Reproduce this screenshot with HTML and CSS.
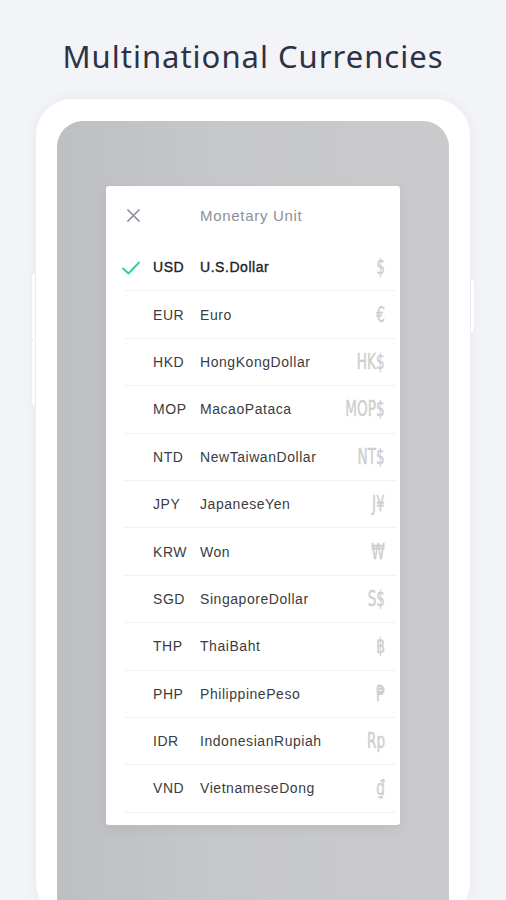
FILE: index.html
```html
<!DOCTYPE html>
<html lang="en">
<head>
<meta charset="utf-8">
<title>Multinational Currencies</title>
<link rel="stylesheet" href="styles.css">
</head>
<body>
<header class="title-wrap">
  <h1 class="title">Multinational Currencies</h1>
</header>
<div class="phone">
  <span class="side-btn side-left-1"></span>
  <span class="side-btn side-left-2"></span>
  <span class="side-btn side-right"></span>
  <div class="screen">
    <section class="card">
      <div class="card-head">
        <svg class="close" viewBox="0 0 16 16" width="16" height="16"><path d="M2 2 L14 14 M14 2 L2 14" stroke="#8e929b" stroke-width="1.6" stroke-linecap="round" fill="none"/></svg>
        <span class="head-title">Monetary Unit</span>
      </div>
      <ul class="list">
        <li class="row selected">
          <svg class="check" viewBox="0 0 20 16" width="20" height="16"><path d="M2 8.5 L7.5 13.5 L18 2.5" stroke="#3fcaa7" stroke-width="2" fill="none" stroke-linecap="round" stroke-linejoin="round"/></svg>
          <span class="code">USD</span><span class="name">U.S.Dollar</span><span class="sym">$</span>
        </li>
        <li class="row"><span class="code">EUR</span><span class="name">Euro</span><span class="sym">€</span></li>
        <li class="row"><span class="code">HKD</span><span class="name">HongKongDollar</span><span class="sym">HK$</span></li>
        <li class="row"><span class="code">MOP</span><span class="name">MacaoPataca</span><span class="sym">MOP$</span></li>
        <li class="row"><span class="code">NTD</span><span class="name">NewTaiwanDollar</span><span class="sym">NT$</span></li>
        <li class="row"><span class="code">JPY</span><span class="name">JapaneseYen</span><span class="sym">J¥</span></li>
        <li class="row"><span class="code">KRW</span><span class="name">Won</span><span class="sym">₩</span></li>
        <li class="row"><span class="code">SGD</span><span class="name">SingaporeDollar</span><span class="sym">S$</span></li>
        <li class="row"><span class="code">THP</span><span class="name">ThaiBaht</span><span class="sym">฿</span></li>
        <li class="row"><span class="code">PHP</span><span class="name">PhilippinePeso</span><span class="sym">₱</span></li>
        <li class="row"><span class="code">IDR</span><span class="name">IndonesianRupiah</span><span class="sym">Rp</span></li>
        <li class="row"><span class="code">VND</span><span class="name">VietnameseDong</span><span class="sym">₫</span></li>
      </ul>
    </section>
  </div>
</div>
</body>
</html>
```
FILE: styles.css
```css
html, body {
  margin: 0;
  padding: 0;
  background: #f3f4f7;
  height: 900px;
  overflow: hidden;
}
body {
  font-family: "Liberation Sans", Arial, sans-serif;
}
.title-wrap {
  height: 99px;
  display: flex;
  justify-content: center;
}
.title {
  margin: 0;
  padding-top: 34px;
  font-family: "Noto Sans", "Liberation Sans", sans-serif;
  font-weight: 400;
  font-size: 31px;
  line-height: 44px;
  letter-spacing: 1px;
  color: #2d3344;
}
.phone {
  position: relative;
  margin-left: 36px;
  width: 434px;
  height: 820px;
  box-sizing: border-box;
  background: #ffffff;
  border-radius: 36px;
  padding: 22px 21px 0 21px;
  box-shadow: 0 0 14px rgba(40, 50, 80, 0.06);
}
.side-btn {
  position: absolute;
  width: 3px;
  background: #ffffff;
  box-shadow: 0 0 3px rgba(40, 50, 80, 0.05);
}
.side-left-1 { left: -4px; top: 175px; height: 66px; border-radius: 2px 0 0 2px; }
.side-left-2 { left: -4px; top: 241px; height: 65px; border-radius: 2px 0 0 2px; }
.side-right { right: -4px; top: 181px; height: 52px; border-radius: 0 2px 2px 0; }
.screen {
  height: 800px;
  border-radius: 26px 26px 0 0;
  background: linear-gradient(90deg, #bebfc3 0%, #c6c7ca 40%, #cacacc 100%);
  padding: 65px 0 0 49px;
  box-sizing: border-box;
}
.card {
  width: 294px;
  background: #ffffff;
  border-radius: 3px;
  box-shadow: 0 4px 12px rgba(0, 0, 0, 0.06);
  padding-bottom: 12px;
}
.card-head {
  height: 58px;
  display: flex;
  align-items: center;
  padding-left: 20px;
}
.close {
  display: block;
  width: 15px;
  height: 15px;
}
.head-title {
  margin-left: 59px;
  font-size: 15px;
  color: #8c909a;
  letter-spacing: 0.7px;
}
.list {
  list-style: none;
  margin: 0;
  padding: 0 4px 0 18px;
}
.row {
  position: relative;
  height: 47.4px;
  display: flex;
  align-items: center;
  border-bottom: 1px solid #f2f2f4;
  box-sizing: border-box;
  font-size: 14px;
  letter-spacing: 0.55px;
  color: #3c3c40;
}
.check {
  position: absolute;
  left: -3px;
  top: 16px;
  width: 20px;
  height: 16px;
}
.code {
  width: 47px;
  margin-left: 29px;
}
.name {
  flex: 1;
}
.selected .code, .selected .name {
  color: #202228;
  -webkit-text-stroke: 0.35px #202228;
}
.sym {
  display: inline-block;
  margin-right: 11px;
  font-family: "DejaVu Sans Condensed", "Liberation Sans Narrow", sans-serif;
  font-weight: 400;
  font-size: 21px;
  color: #cdcecf;
  letter-spacing: 0;
  transform: scaleX(0.72);
  transform-origin: right center;
  -webkit-text-stroke: 0.4px #cdcecf;
}
```
